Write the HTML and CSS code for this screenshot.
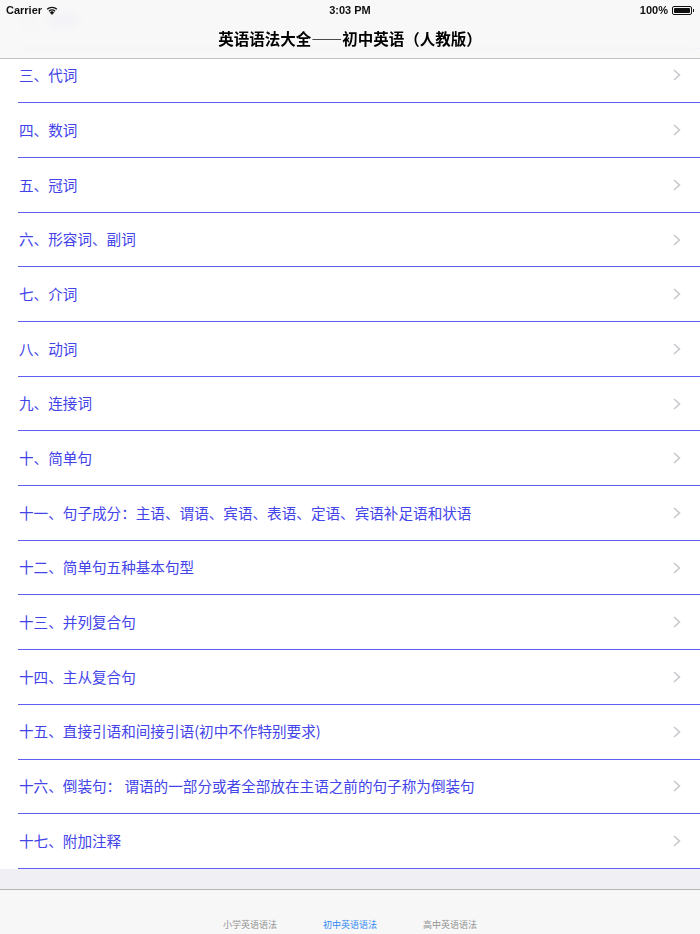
FILE: index.html
```html
<!DOCTYPE html>
<html lang="zh">
<head>
<meta charset="utf-8">
<title>英语语法大全——初中英语（人教版）</title>
<link rel="stylesheet" href="styles.css">
</head>
<body>
<div class="screen">
  <div class="content">
    <ul class="list">
      <li class="row"><div class="row-inner"><span class="label">二、名词</span><svg class="chev" viewBox="0 0 8 12"><polyline points="1,1 6.5,6 1,11"/></svg></div></li>
      <li class="row"><div class="row-inner"><span class="label">三、代词</span><svg class="chev" viewBox="0 0 8 12"><polyline points="1,1 6.5,6 1,11"/></svg></div></li>
      <li class="row"><div class="row-inner"><span class="label">四、数词</span><svg class="chev" viewBox="0 0 8 12"><polyline points="1,1 6.5,6 1,11"/></svg></div></li>
      <li class="row"><div class="row-inner"><span class="label">五、冠词</span><svg class="chev" viewBox="0 0 8 12"><polyline points="1,1 6.5,6 1,11"/></svg></div></li>
      <li class="row"><div class="row-inner"><span class="label">六、形容词、副词</span><svg class="chev" viewBox="0 0 8 12"><polyline points="1,1 6.5,6 1,11"/></svg></div></li>
      <li class="row"><div class="row-inner"><span class="label">七、介词</span><svg class="chev" viewBox="0 0 8 12"><polyline points="1,1 6.5,6 1,11"/></svg></div></li>
      <li class="row"><div class="row-inner"><span class="label">八、动词</span><svg class="chev" viewBox="0 0 8 12"><polyline points="1,1 6.5,6 1,11"/></svg></div></li>
      <li class="row"><div class="row-inner"><span class="label">九、连接词</span><svg class="chev" viewBox="0 0 8 12"><polyline points="1,1 6.5,6 1,11"/></svg></div></li>
      <li class="row"><div class="row-inner"><span class="label">十、简单句</span><svg class="chev" viewBox="0 0 8 12"><polyline points="1,1 6.5,6 1,11"/></svg></div></li>
      <li class="row"><div class="row-inner"><span class="label">十一、句子成分：主语、谓语、宾语、表语、定语、宾语补足语和状语</span><svg class="chev" viewBox="0 0 8 12"><polyline points="1,1 6.5,6 1,11"/></svg></div></li>
      <li class="row"><div class="row-inner"><span class="label">十二、简单句五种基本句型</span><svg class="chev" viewBox="0 0 8 12"><polyline points="1,1 6.5,6 1,11"/></svg></div></li>
      <li class="row"><div class="row-inner"><span class="label">十三、并列复合句</span><svg class="chev" viewBox="0 0 8 12"><polyline points="1,1 6.5,6 1,11"/></svg></div></li>
      <li class="row"><div class="row-inner"><span class="label">十四、主从复合句</span><svg class="chev" viewBox="0 0 8 12"><polyline points="1,1 6.5,6 1,11"/></svg></div></li>
      <li class="row"><div class="row-inner"><span class="label">十五、直接引语和间接引语(初中不作特别要求)</span><svg class="chev" viewBox="0 0 8 12"><polyline points="1,1 6.5,6 1,11"/></svg></div></li>
      <li class="row"><div class="row-inner"><span class="label">十六、倒装句： 谓语的一部分或者全部放在主语之前的句子称为倒装句</span><svg class="chev" viewBox="0 0 8 12"><polyline points="1,1 6.5,6 1,11"/></svg></div></li>
      <li class="row"><div class="row-inner"><span class="label">十七、附加注释</span><svg class="chev" viewBox="0 0 8 12"><polyline points="1,1 6.5,6 1,11"/></svg></div></li>
    </ul>
  </div>

  <div class="topbar">
    <div class="status">
      <div class="status-left">
        <span class="carrier">Carrier</span>
        <svg class="wifi" viewBox="0 0 14 10"><path d="M7 9.6 L4.9 7.3 A3 3 0 0 1 9.1 7.3 Z"/><path d="M3.4 5.8 A5.2 5.2 0 0 1 10.6 5.8" fill="none" stroke-width="1.5"/><path d="M1.3 3.6 A8.2 8.2 0 0 1 12.7 3.6" fill="none" stroke-width="1.5"/></svg>
      </div>
      <span class="time">3:03 PM</span>
      <div class="status-right">
        <span class="pct">100%</span>
        <span class="battery"><span class="battery-fill"></span></span><span class="battery-tip"></span>
      </div>
    </div>
    <div class="navbar">
      <h1 class="title">英语语法大全——初中英语（人教版）</h1>
    </div>
  </div>

  <nav class="tabbar">
    <span class="tab">小学英语语法</span>
    <span class="tab active">初中英语语法</span>
    <span class="tab">高中英语语法</span>
  </nav>
</div>
</body>
</html>
```

FILE: styles.css
```css
* { box-sizing: border-box; }
html, body { margin: 0; padding: 0; }
body {
  width: 700px;
  height: 934px;
  overflow: hidden;
  background: #efeff4;
  font-family: "Noto Sans CJK SC", "Noto Sans", sans-serif;
}
.screen {
  position: relative;
  width: 700px;
  height: 934px;
  display: flex;
  flex-direction: column;
  overflow: hidden;
}
.content {
  flex: 1;
  overflow: hidden;
  background: #efeff4;
}
.list {
  list-style: none;
  margin: -6.1px 0 0 0;
  padding: 0;
  background: #ffffff;
}
.row { height: 54.69px; }
.row-inner {
  height: 100%;
  margin-left: 18px;
  padding-left: 1px;
  padding-right: 19px;
  border-bottom: 1px solid #5f5ff2;
  display: flex;
  align-items: center;
  justify-content: space-between;
}
.label {
  font-size: 14.6px;
  color: #4343ea;
  line-height: 1;
  white-space: nowrap;
}
.chev {
  width: 8px;
  height: 12px;
  fill: none;
  stroke: #c7c7cc;
  stroke-width: 1.6;
}

/* top translucent bars, drawn over the list */
.topbar {
  position: absolute;
  top: 0; left: 0; right: 0;
  height: 59px;
  background: rgba(247, 247, 247, 0.9);
  backdrop-filter: blur(6px);
  border-bottom: 1px solid #c4c4c4;
}
.status {
  height: 20px;
  display: flex;
  align-items: center;
  justify-content: space-between;
  padding: 0 6px 0 6px;
  font-family: "Liberation Sans", Arial, sans-serif;
  font-size: 11px;
  font-weight: bold;
  color: #111;
  position: relative;
}
.status-left { display: flex; align-items: center; gap: 4px; }
.wifi { width: 12px; height: 9px; fill: #111; stroke: #111; }
.time {
  position: absolute;
  left: 0; right: 0;
  text-align: center;
  pointer-events: none;
}
.status-right { display: flex; align-items: center; }
.pct { margin-right: 4px; }
.battery {
  width: 20px;
  height: 9px;
  border: 1px solid #111;
  border-radius: 2px;
  padding: 1px;
  display: flex;
}
.battery-fill { flex: 1; background: #111; border-radius: 1px; }
.battery-tip {
  width: 1.5px;
  height: 3px;
  background: #111;
  margin-left: 0.5px;
}
.navbar {
  height: 38px;
  display: flex;
  align-items: center;
  justify-content: center;
}
.title {
  margin: 0;
  font-size: 15.5px;
  font-weight: bold;
  color: #000;
  line-height: 1;
  position: relative;
  top: 0px;
}

/* tab bar */
.tabbar {
  height: 45.5px;
  flex: 0 0 auto;
  background: #f7f7f7;
  border-top: 1px solid #b4b4b4;
  display: flex;
  justify-content: center;
  align-items: flex-end;
  padding-bottom: 3px;
}
.tab {
  width: 100px;
  text-align: center;
  font-size: 9px;
  line-height: 12px;
  color: #929292;
}
.tab.active { color: #2f8af5; }
```
